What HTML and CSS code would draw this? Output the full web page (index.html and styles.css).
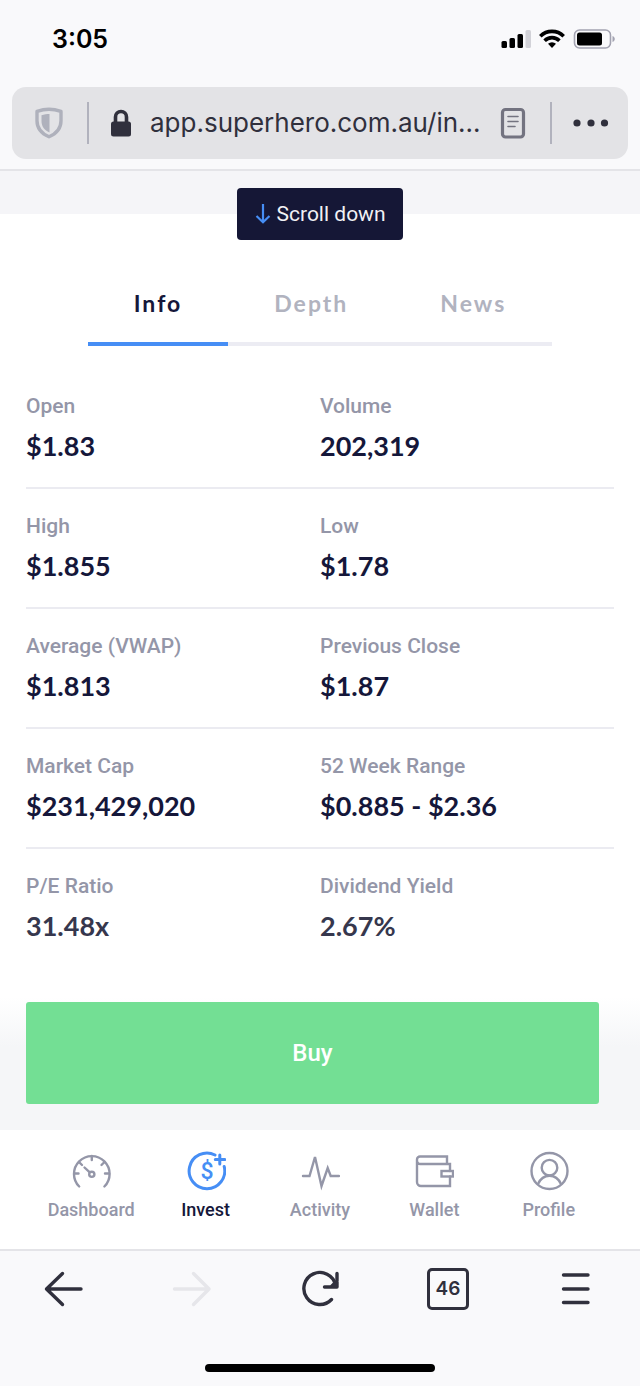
FILE: index.html
```html
<!DOCTYPE html>
<html lang="en">
<head>
    <meta charset="UTF-8">
    <meta name="viewport" content="width=device-width, initial-scale=1">
    <title>Superhero - Invest</title>
    <link rel="stylesheet" href="styles.css">
</head>
<body>
    <header class="chrome">
        <div class="status">
            <time class="clock">3:05</time>
            <div class="status-icons">
                <svg width="30" height="20" viewBox="0 0 30 20" aria-hidden="true">
                    <rect x="0.500" y="12" width="5.500" height="7" rx="1.5" />
                    <rect x="8.500" y="9" width="5.500" height="10" rx="1.5" />
                    <rect x="16.500" y="5" width="5.500" height="14" rx="1.5" />
                    <rect x="24.500" y="1" width="5.500" height="18" rx="1.5" fill="#d2d2d8" />
                </svg>
                <svg width="26" height="20" viewBox="0 0 26 20" fill="none" stroke="#000" stroke-width="3.6" aria-hidden="true">
                    <path d="M1.3 7.2a16.6 16.6 0 0 1 23.4 0" />
                    <path d="M5.6 11.7a10.5 10.5 0 0 1 14.8 0" />
                    <path d="M13 19l-4-4.2a5.8 5.8 0 0 1 8 0z" fill="#000" stroke="none" />
                </svg>
                <svg width="42" height="20" viewBox="0 0 42 20" aria-hidden="true">
                    <rect x="1.500" y="1" width="36" height="18" rx="5" fill="none" stroke="#a3a3b1" stroke-width="1.6" />
                    <rect x="4" y="3.5" width="25" height="13" rx="2.5" />
                    <path d="M39.500 7c3 1 3 5 0 6z" fill="#a3a3b1" />
                </svg>
            </div>
        </div>
        <div class="address">
            <svg class="shield" width="28" height="32" viewBox="0 0 28 32" aria-hidden="true">
                <path d="M14 2.2c4 0 8 .8 12 2.2v9.300c0 7.500-4.500 12.800-12 16-7.500-3.200-12-8.500-12-16V4.400C6 3 10 2.200 14 2.200z" fill="none" stroke="#afb1bc" stroke-width="3.4" stroke-linejoin="round" />
                <path d="M14.500 7v18.500C9.300 23 6.500 19.500 6.500 14V8.200C9 7.400 12 7 14.500 7z" fill="#afb1bc" />
            </svg>
            <span class="divider"></span>
            <svg class="lock" width="22" height="28" viewBox="0 0 22 28" aria-hidden="true">
                <path d="M5.500 14V8a5.500 5.500 0 0 1 11 0v6" fill="none" stroke="#30303d" stroke-width="3.600" />
                <rect x="1" y="12.500" width="20" height="15" rx="2.500" fill="#30303d" />
            </svg>
            <input class="url" type="text" value="app.superhero.com.au/in..." aria-label="Address" readonly>
            <button class="icon-btn" aria-label="Reader view">
                <svg width="26" height="32" viewBox="0 0 26 32" fill="none" stroke="#737380" aria-hidden="true">
                    <rect x="2.500" y="2.500" width="21" height="27.500" rx="3" stroke-width="3.200" />
                    <path d="M8 9.500h10M8 14.500h10M8 19.500h7" stroke-width="1.600" stroke-linecap="round" />
                </svg>
            </button>
            <span class="divider"></span>
            <button class="icon-btn" aria-label="More options">
                <svg width="36" height="8" viewBox="0 0 36 8" fill="#30303d" aria-hidden="true">
                    <circle cx="4" cy="4" r="3.600" />
                    <circle cx="18" cy="4" r="3.600" />
                    <circle cx="31.500" cy="4" r="3.600" />
                </svg>
            </button>
        </div>
    </header>

    <main>
        <div class="scroll-bar">
            <button class="scroll-btn">
                <svg width="16" height="20" viewBox="0 0 16 20" fill="none" stroke="#468ef5" stroke-width="2.200" aria-hidden="true">
                    <path d="M8 0v18M1.500 12l6.500 6.300L14.500 12" />
                </svg>
                Scroll down
            </button>
        </div>

        <div class="tabs" role="tablist">
            <button class="tab active" role="tab" aria-selected="true">Info</button>
            <button class="tab" role="tab" aria-selected="false">Depth</button>
            <button class="tab" role="tab" aria-selected="false">News</button>
        </div>

        <dl class="stats">
            <div class="row">
                <div class="stat"><dt>Open</dt><dd>$1.83</dd></div>
                <div class="stat"><dt>Volume</dt><dd>202,319</dd></div>
            </div>
            <div class="row">
                <div class="stat"><dt>High</dt><dd>$1.855</dd></div>
                <div class="stat"><dt>Low</dt><dd>$1.78</dd></div>
            </div>
            <div class="row">
                <div class="stat"><dt>Average (VWAP)</dt><dd>$1.813</dd></div>
                <div class="stat"><dt>Previous Close</dt><dd>$1.87</dd></div>
            </div>
            <div class="row">
                <div class="stat"><dt>Market Cap</dt><dd>$231,429,020</dd></div>
                <div class="stat"><dt>52 Week Range</dt><dd>$0.885 - $2.36</dd></div>
            </div>
            <div class="row">
                <div class="stat"><dt>P/E Ratio</dt><dd>31.48x</dd></div>
                <div class="stat"><dt>Dividend Yield</dt><dd>2.67%</dd></div>
            </div>
        </dl>

        <div class="order">
            <button class="buy">Buy</button>
        </div>
    </main>

    <nav class="app-nav">
        <a href="#dashboard">
            <svg width="40" height="40" viewBox="0 0 40 40" aria-hidden="true">
                <path d="M8.200 35.500a17.800 17.800 0 1 1 25.200 0" />
                <path d="M3.500 22.500h4M38 22.500h-4M20.800 5v4M8 11l3 3M33.500 11l-3 3M13.500 16.500l5 4.700" />
                <circle cx="20.800" cy="23.300" r="2.600" />
            </svg>
            Dashboard
        </a>
        <a class="active" href="#invest">
            <svg width="40" height="40" viewBox="0 0 40 40" aria-hidden="true">
                <path d="M29 4A17.800 17.800 0 1 0 38.200 15.500" />
                <path d="M33.800 4v9M29.300 8.500h9.400" />
                <text class="dollar" x="21" y="28" text-anchor="middle">$</text>
            </svg>
            Invest
        </a>
        <a href="#activity">
            <svg width="40" height="40" viewBox="0 0 40 40" aria-hidden="true">
                <path d="M3 25h6.500L15 6l6.500 29L27.700 17l3 8H39" />
            </svg>
            Activity
        </a>
        <a href="#wallet">
            <svg width="40" height="40" viewBox="0 0 40 40" aria-hidden="true">
                <path d="M33 13V5.500H6a3 3 0 0 0-3 3V31a4 4 0 0 0 4 4h29v-9.500M36 20v-7H6.500A3.300 3.300 0 0 1 3 9.500" />
                <rect x="27.500" y="20" width="11.500" height="5.500" />
            </svg>
            Wallet
        </a>
        <a href="#profile">
            <svg width="40" height="40" viewBox="0 0 40 40" aria-hidden="true">
                <circle cx="20.500" cy="20" r="18" />
                <circle cx="20.500" cy="16.700" r="7.800" />
                <path d="M9 33c5-11 18-11 23 0" />
            </svg>
            Profile
        </a>
    </nav>

    <footer class="toolbar">
        <div class="toolbar-buttons">
            <button class="icon-btn" aria-label="Back">
                <svg width="40" height="40" viewBox="0 0 40 40" aria-hidden="true">
                    <path d="M37 20H2.500M18.500 4.500L2.500 20l16 15.500" />
                </svg>
            </button>
            <button class="icon-btn forward" aria-label="Forward" disabled>
                <svg width="40" height="40" viewBox="0 0 40 40" aria-hidden="true">
                    <path d="M2.500 20H37M21.500 4.500L37 20 21.500 35.500" />
                </svg>
            </button>
            <button class="icon-btn" aria-label="Reload">
                <svg width="40" height="40" viewBox="0 0 40 40" aria-hidden="true">
                    <path d="M31.500 30.500A16 16 0 1 1 35.500 16" />
                    <path d="M37 4.500V18H24.500M31 18l6-6" />
                </svg>
            </button>
            <button class="tab-count" aria-label="46 open tabs">46</button>
            <button class="icon-btn" aria-label="Menu">
                <svg width="40" height="40" viewBox="0 0 40 40" aria-hidden="true">
                    <path d="M7.500 6h24.500M7.500 20h24.500M7.500 33.500h24.500" />
                </svg>
            </button>
        </div>
        <div class="home-indicator"></div>
    </footer>
</body>
</html>
```

FILE: styles.css
```css
* {
    box-sizing: border-box;
}

body {
    margin: 0;
    background: #fff;
    color: #15173a;
    font-family: Roboto, "Liberation Sans", sans-serif;
}

button {
    margin: 0;
    padding: 0;
    border: 0;
    background: none;
    font-family: inherit;
    cursor: pointer;
}

svg {
    display: block;
    flex-shrink: 0;
}

/* browser top bar */
.chrome {
    padding-bottom: 10px;
    background: #f9f9fb;
    border-bottom: 2px solid #e4e4e8;
}

.status {
    display: flex;
    justify-content: space-between;
    padding: 23px 25px 32px 52px;
}

.clock {
    color: #000;
    font: 600 25px/32px Inter, sans-serif;
}

.status-icons {
    display: flex;
    align-items: center;
    gap: 8px;
}

.address {
    display: flex;
    align-items: center;
    height: 72px;
    margin: 0 12px;
    padding: 0 19px 0 23px;
    background: #e3e3e6;
    border-radius: 14px;
}

.divider {
    width: 2px;
    height: 42px;
    margin: 0 21px 0 24px;
    background: #b1b2bd;
}

.url {
    flex: 1;
    min-width: 0;
    margin: 0 20px 0 18px;
    padding: 0;
    border: 0;
    background: none;
    color: #30303d;
    font: 400 26px/36px Inter, sans-serif;
    outline: none;
}

/* scroll hint */
.scroll-bar {
    display: flex;
    justify-content: center;
    padding-top: 17px;
    background: linear-gradient(#f5f5f8 43px, #fff 43px);
}

.scroll-btn {
    display: flex;
    align-items: center;
    gap: 6px;
    height: 52px;
    padding: 0 18px;
    border-radius: 4px;
    background: #151736;
    color: #f1f1f4;
    font-size: 21px;
}

/* tabs */
.tabs {
    display: flex;
    width: fit-content;
    margin: 49px auto 23px;
}

.tab {
    padding: 0 46px 25px;
    border-bottom: 4px solid #ececf3;
    color: #b1b3bf;
    font: 700 23px/28px Lato, sans-serif;
    letter-spacing: 2px;
}

.tab.active {
    border-color: #468ef5;
    color: #15173a;
}

/* stats */
.stats {
    margin: 0 26px;
}

.row {
    display: grid;
    grid-template-columns: 1fr 1fr;
    padding: 25px 0;
    border-bottom: 2px solid #ebebf1;
}

.row:last-child {
    border-bottom: 0;
}

.stat dt {
    margin-bottom: 12px;
    color: #9496a8;
    font-size: 21px;
    font-weight: 500;
    line-height: 24px;
}

.stat dd {
    margin: 0;
    font: 700 27px/32px Lato, sans-serif;
}

.row:last-child dd {
    color: #36374d;
}

/* order button */
.order {
    padding: 35px 41px 26px 26px;
    background: linear-gradient(#fff 30px, #f5f6f8 80px);
}

.buy {
    display: block;
    width: 100%;
    height: 102px;
    border-radius: 3px;
    background: #73df94;
    color: #fff;
    font-size: 24px;
    font-weight: 500;
}

/* app navigation */
.app-nav {
    display: grid;
    grid-template-columns: repeat(5, 1fr);
    height: 119px;
    padding: 21px 34px 0;
    background: #fff;
}

.app-nav a {
    display: flex;
    flex-direction: column;
    align-items: center;
    gap: 9px;
    color: #9496a8;
    font-size: 18px;
    font-weight: 500;
    line-height: 20px;
    text-decoration: none;
}

.app-nav a.active {
    color: #15173a;
}

.app-nav svg {
    fill: none;
    stroke: #9496a8;
    stroke-width: 2.4;
    stroke-linecap: round;
}

.app-nav .active svg {
    stroke: #468ef5;
    stroke-width: 3;
}

.app-nav .dollar {
    fill: #468ef5;
    stroke: none;
    font-size: 23px;
    font-weight: 500;
}

/* browser bottom bar */
.toolbar {
    padding-bottom: 14px;
    background: #f9f9fb;
    border-top: 2px solid #e4e4e8;
}

.toolbar-buttons {
    display: grid;
    grid-template-columns: repeat(5, 1fr);
    place-items: center;
    height: 76px;
}

.toolbar svg {
    fill: none;
    stroke: #30303d;
    stroke-width: 3.4;
    stroke-linecap: round;
    stroke-linejoin: round;
}

.toolbar .forward svg {
    stroke: #e6e6ea;
}

.tab-count {
    width: 42px;
    height: 42px;
    border: 3px solid #30303d;
    border-radius: 5px;
    color: #30303d;
    font: 600 19px/20px Inter, sans-serif;
}

.home-indicator {
    width: 36%;
    height: 8px;
    margin: 37px auto 0;
    border-radius: 4px;
    background: #000;
}
```
